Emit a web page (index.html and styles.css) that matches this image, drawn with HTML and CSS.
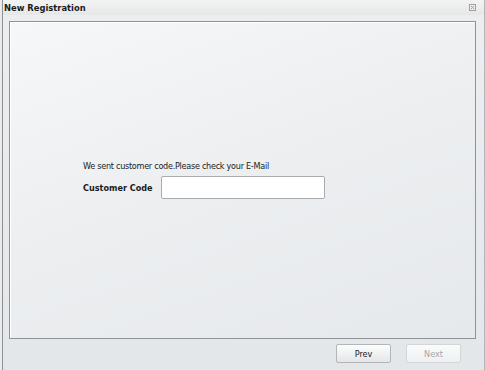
FILE: index.html
```html
<!DOCTYPE html>
<html>
<head>
<meta charset="utf-8">
<link rel="stylesheet" href="styles.css">
</head>
<body>
<div class="window">
  <div class="titlebar">
    <span class="title">New Registration</span>
    <svg class="close" width="7" height="7" viewBox="0 0 7 7"><rect x="0.5" y="0.5" width="6" height="6" fill="none" stroke="#a0a0a0"/><path d="M2 2 L5 5 M5 2 L2 5" stroke="#a0a0a0" stroke-width="1"/></svg>
  </div>
  <div class="body">
    <div class="panel">
      <p class="msg">We sent customer code.Please check your E-Mail</p>
      <div class="row">
        <label class="label">Customer Code</label>
        <input class="input" type="text">
      </div>
    </div>
    <div class="buttons">
      <button class="btn">Prev</button>
      <button class="btn disabled">Next</button>
    </div>
  </div>
</div>
</body>
</html>
```
FILE: styles.css
```css
html, body {
  margin: 0;
  padding: 0;
  width: 485px;
  height: 370px;
  overflow: hidden;
  background: #e9ebed;
  font-family: "DejaVu Sans Condensed", "DejaVu Sans", sans-serif;
  font-stretch: condensed;
}
.window {
  box-sizing: border-box;
  height: 370px;
  margin-left: 2px;
  width: 483px;
  border-left: 1px solid #8e9194;
  border-right: 1px solid #b4b7ba;
  display: flex;
  flex-direction: column;
  background: linear-gradient(#eceef0, #e4e7ea);
}
.titlebar {
  box-sizing: border-box;
  height: 15px;
  flex: none;
  display: flex;
  align-items: center;
  justify-content: space-between;
  padding: 0 8px 0 1px;
  background: linear-gradient(#f3f3f3, #e6e7e8);
}
.title {
  font-size: 9.3px;
  font-weight: bold;
  color: #1b1b1b;
}
.close { display: block; }
.body {
  flex: 1;
  display: flex;
  flex-direction: column;
  padding: 6px 8px 0 6px;
}
.panel {
  box-sizing: border-box;
  height: 318px;
  flex: none;
  border: 1px solid #8f9396;
  box-shadow: inset 1px 1px 0 #ffffff;
  background: linear-gradient(160deg, #f6f7f8 0%, #eceef0 50%, #e6e9ec 100%);
  display: flex;
  flex-direction: column;
  justify-content: center;
  padding-left: 73px;
}
.msg {
  margin: 0 0 5px 0;
  font-size: 9px;
  letter-spacing: -0.27px;
  color: #222;
}
.row {
  display: flex;
  align-items: center;
  gap: 8px;
}
.label {
  font-size: 9px;
  font-weight: bold;
  color: #1a1a1a;
}
.input {
  box-sizing: border-box;
  width: 164px;
  height: 23px;
  border: 1px solid #a8abaf;
  border-radius: 2px;
  background: #fff;
  margin: 0;
}
.buttons {
  display: flex;
  justify-content: flex-end;
  gap: 15px;
  padding: 5px 15px 0 0;
}
.btn {
  box-sizing: border-box;
  width: 55px;
  height: 19px;
  border: 1px solid #b3b6b9;
  border-radius: 2px;
  background: linear-gradient(#fdfdfd, #e4e6e8);
  font-family: "DejaVu Sans Condensed", "DejaVu Sans", sans-serif;
  font-stretch: condensed;
  font-size: 9px;
  color: #1a1a1a;
  padding: 0;
}
.btn.disabled {
  color: #a4a7aa;
  border-color: #d3d6d9;
  background: linear-gradient(#fafbfb, #eef0f1);
}
```
